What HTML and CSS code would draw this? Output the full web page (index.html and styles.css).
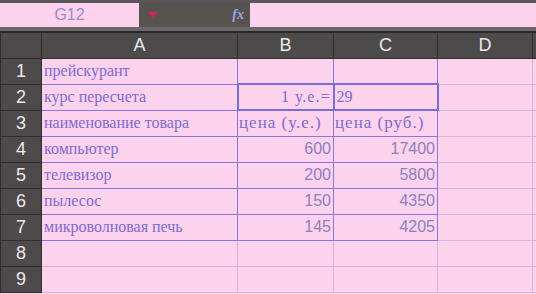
FILE: index.html
```html
<!DOCTYPE html>
<html lang="ru">
<head>
    <meta charset="UTF-8">
    <title>Прейскурант</title>
    <link rel="stylesheet" href="styles.css">
</head>
<body>
    <!-- строка формул -->
    <div class="formula-bar">
        <div class="name-box">G12</div>
        <div class="tools">
            <svg class="arrow" width="10" height="6" viewBox="0 0 10 6"><path d="M0 0 L10 0 L5 6 Z" fill="#d2215c"/></svg>
            <span class="fx">fx</span>
        </div>
        <div class="formula"></div>
    </div>

    <table class="sheet">
        <colgroup>
            <col class="c-hdr"><col class="c-a"><col class="c-b"><col class="c-c"><col class="c-d"><col>
        </colgroup>
        <tr class="col-heads">
            <th></th><th>A</th><th>B</th><th>C</th><th>D</th><th></th>
        </tr>
        <tr>
            <th>1</th><td class="b">прейскурант</td><td class="b"></td><td class="b"></td><td></td><td></td>
        </tr>
        <tr>
            <th>2</th><td class="b">курс пересчета</td><td class="b thick num-s">1 у.е.=</td><td class="b thick">29</td><td></td><td></td>
        </tr>
        <tr>
            <th>3</th><td class="b">наименование товара</td><td class="b wide">цена (у.е.)</td><td class="b wide">цена (руб.)</td><td></td><td></td>
        </tr>
        <tr>
            <th>4</th><td class="b">компьютер</td><td class="b num">600</td><td class="b num">17400</td><td></td><td></td>
        </tr>
        <tr>
            <th>5</th><td class="b">телевизор</td><td class="b num">200</td><td class="b num">5800</td><td></td><td></td>
        </tr>
        <tr>
            <th>6</th><td class="b">пылесос</td><td class="b num">150</td><td class="b num">4350</td><td></td><td></td>
        </tr>
        <tr>
            <th>7</th><td class="b">микроволновая печь</td><td class="b num">145</td><td class="b num">4205</td><td></td><td></td>
        </tr>
        <tr>
            <th>8</th><td></td><td></td><td></td><td></td><td></td>
        </tr>
        <tr>
            <th>9</th><td></td><td></td><td></td><td></td><td></td>
        </tr>
    </table>
</body>
</html>
```

FILE: styles.css
```css
body {
    margin: 0;
    background-color: #fdd2ec;
    font-family: "Liberation Serif", serif;
    overflow: hidden;
}

/* строка формул */
.formula-bar {
    display: flex;
    height: 24px;
    border-top: 3px solid #5a565a;
    border-bottom: 4px solid #6d676c;
}

.name-box {
    width: 139px;
    background-color: #fdd2ec;
    color: #9a8ac8;
    font-family: "Liberation Sans", sans-serif;
    font-size: 16px;
    line-height: 24px;
    text-align: center;
}

.tools {
    width: 111px;
    background-color: #57534f;
    display: flex;
    align-items: center;
    justify-content: space-between;
    padding: 0 6px 0 9px;
    box-sizing: border-box;
}

.fx {
    font-style: italic;
    font-weight: bold;
    font-size: 14px;
    color: #9aa3e6;
}

.formula {
    flex: 1;
    background-color: #fdd2ec;
}

/* таблица */
.sheet {
    border-collapse: collapse;
    table-layout: fixed;
    width: 540px;
}

.c-hdr { width: 41px; }
.c-a { width: 196px; }
.c-b { width: 96px; }
.c-c { width: 104px; }
.c-d { width: 95px; }

.sheet tr {
    height: 26px;
}

.sheet th {
    background-color: #4c4a4a;
    color: #ece8ea;
    font-family: "Liberation Sans", sans-serif;
    font-weight: normal;
    font-size: 18px;
    border: 1px solid #2f2d2e;
    padding: 0;
}

.col-heads th {
    border-top: 2px solid #2a2829;
}

.sheet td {
    border: 1px solid #d2b8d6;
    color: #7b6bd2;
    font-size: 16px;
    padding: 0 2px;
    white-space: nowrap;
    overflow: hidden;
}

.sheet td.b {
    border: 1px solid #8878dc;
}

.sheet td.thick {
    border: 2px solid #7c6cd6;
}

.sheet td.wide {
    font-size: 17px;
    letter-spacing: 1px;
    padding: 0 1px;
}

.num {
    text-align: right;
    font-family: "Liberation Sans", sans-serif;
    font-size: 15px;
    color: #8c80c0 !important;
}

.num-s {
    text-align: right;
    letter-spacing: 1px;
}
```
